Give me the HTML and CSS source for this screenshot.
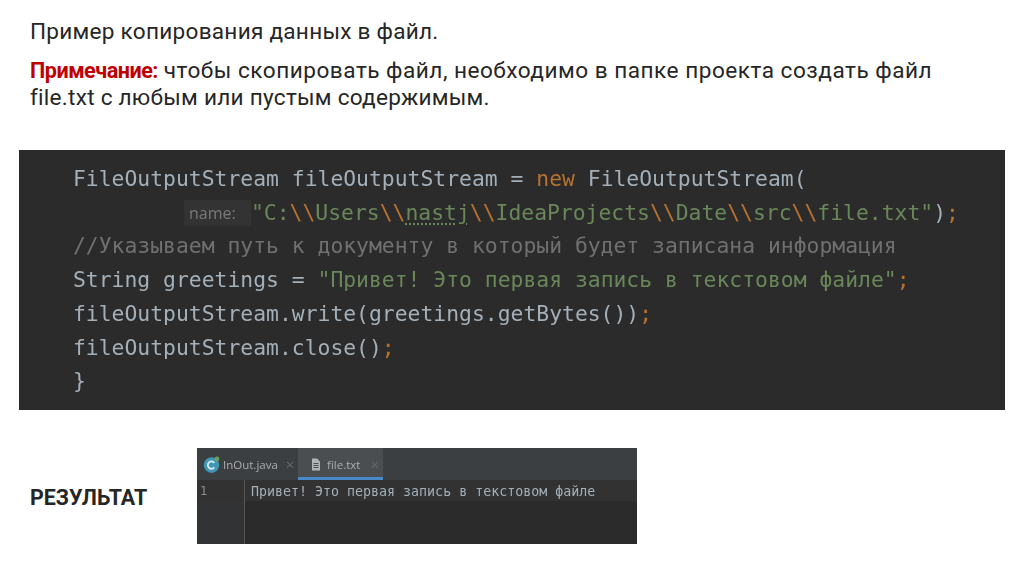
FILE: index.html
```html
<!DOCTYPE html>
<html lang="ru">
<head>
<meta charset="utf-8">
<title>Пример копирования данных в файл</title>
<link rel="stylesheet" href="styles.css">
</head>
<body>
<main class="slide">
  <section class="intro">
    <p class="para">Пример копирования данных в файл.</p>
    <p class="para note"><b class="red">Примечание:</b> <span class="wide">чтобы скопировать файл, необходимо в папке проекта создать файл</span><br>file.txt с любым или пустым содержимым.</p>
  </section>
  <pre class="code"><span class="line">FileOutputStream fileOutputStream = <i class="kw">new</i> FileOutputStream(</span>
<span class="line">        <span class="hint">name:</span><i class="str">"C:<i class="esc">\\</i>Users<i class="esc">\\</i><u class="typo">nastj</u><i class="esc">\\</i>IdeaProjects<i class="esc">\\</i>Date<i class="esc">\\</i>src<i class="esc">\\</i>file.txt"</i>)<i class="kw">;</i></span>
<span class="line cmt">//Указываем путь к документу в который будет записана информация</span>
<span class="line">String greetings = <i class="str">"Привет! Это первая запись в текстовом файле"</i><i class="kw">;</i></span>
<span class="line">fileOutputStream.write(greetings.getBytes())<i class="kw">;</i></span>
<span class="line">fileOutputStream.close()<i class="kw">;</i></span>
<span class="line">}</span></pre>
  <section class="result">
    <h2 class="result-label">РЕЗУЛЬТАТ</h2>
    <div class="ide">
      <div class="tabs">
        <div class="tab">
          <svg class="ico" viewBox="0 0 14 14"><circle cx="7" cy="7.5" r="6.4" fill="#3f97b5"/><path d="M9.3 5.6a3 3 0 1 0 0 3.8" fill="none" stroke="#d8e8ee" stroke-width="1.5"/><circle cx="11.5" cy="2.5" r="2" fill="#6f9e5a"/></svg>
          <span>InOut.java</span><span class="x">×</span>
        </div>
        <div class="tab active">
          <svg class="ico file" viewBox="0 0 12 14"><path d="M2 1h5l3 3v9H2z" fill="#aeb4b8"/><path d="M3.5 6h5M3.5 8h5M3.5 10h5" stroke="#4a4d50" stroke-width="1"/></svg>
          <span>file.txt</span><span class="x">×</span>
        </div>
      </div>
      <div class="editor">
        <div class="gutter"><div class="num">1</div></div>
        <div class="text"><div class="current">Привет! Это первая запись в текстовом файле</div></div>
      </div>
    </div>
  </section>
</main>
</body>
</html>
```
FILE: styles.css
```css
* { box-sizing: border-box; }
html, body { margin: 0; background: #fff; }
.slide {
  width: 1024px;
  height: 574px;
  overflow: hidden;
  display: flex;
  flex-direction: column;
  font-family: Roboto, "Noto Sans", sans-serif;
  color: #262626;
}
.intro { padding: 18px 30px 0; height: 150px; }
.para { margin: 0; font-size: 22.6px; letter-spacing: 0.25px; line-height: 27px; }
.note { margin-top: 12px; }
.wide { letter-spacing: 0.5px; }
.red { color: #c00000; font-size: 21.6px; font-weight: 700; letter-spacing: -0.5px; }
.code {
  margin: 0 0 0 19px;
  width: 986px;
  height: 260px;
  padding: 12px 0 0 54px;
  background: #2b2b2b;
  font-family: "DejaVu Sans Mono", "Liberation Mono", monospace;
  font-size: 21.38px;
  line-height: 33.7px;
  color: #a4afb8;
  filter: blur(0.5px);
}
.code i { font-style: normal; }
.line { white-space: pre; }
.kw { color: #b8712f; }
.str { color: #6a8759; }
.esc { color: #b8712f; }
.cmt { color: #70716f; }
.typo { text-decoration: underline dotted #6a8759; text-underline-offset: 4px; }
.hint {
  display: inline-block;
  width: 67px;
  margin-left: 8px;
  padding-left: 5px;
  font-family: "Open Sans", sans-serif;
  font-size: 16px;
  line-height: 26px;
  background: #333;
  color: #77797b;
  vertical-align: 1px;
}
.result {
  display: flex;
  align-items: center;
  margin-top: 38px;
  padding-left: 30px;
}
.result-label {
  margin: 0;
  padding-top: 3px;
  width: 167px;
  font-size: 21.4px;
  font-weight: 700;
  color: #262626;
}
.ide {
  width: 440px;
  height: 96px;
  background: #2b2b2b;
  filter: blur(0.4px);
  display: flex;
  flex-direction: column;
}
.tabs {
  height: 32px;
  display: flex;
  background: #3c3f41;
  font-family: "Open Sans", sans-serif;
  font-size: 11.5px;
  color: #a8adb0;
}
.tab {
  display: flex;
  align-items: center;
  gap: 3px;
  padding-left: 6px;
  width: 101px;
}
.tab.active {
  width: 85px;
  padding: 3px 0 0 12px;
  gap: 5px;
  background: #4a4e51;
  border-bottom: 3px solid #4a88c7;
}
.ico { width: 17px; height: 17px; flex: none; }
.ico.file { width: 12px; }
.x { color: #66696c; font-size: 15px; line-height: 1; margin-left: 5px; }
.editor { flex: 1; display: flex; }
.gutter {
  width: 48px;
  background: #313335;
  border-right: 1px solid #555;
  font-family: "DejaVu Sans Mono", monospace;
  font-size: 12px;
  color: #8a8d8f;
}
.num { height: 21px; line-height: 23px; padding-left: 3px; background: #323232; }
.text { flex: 1; }
.current {
  height: 21px;
  line-height: 23px;
  padding-left: 6px;
  background: #323232;
  font-family: "DejaVu Sans Mono", monospace;
  font-size: 13.3px;
  color: #a4afb8;
  white-space: pre;
}
```
